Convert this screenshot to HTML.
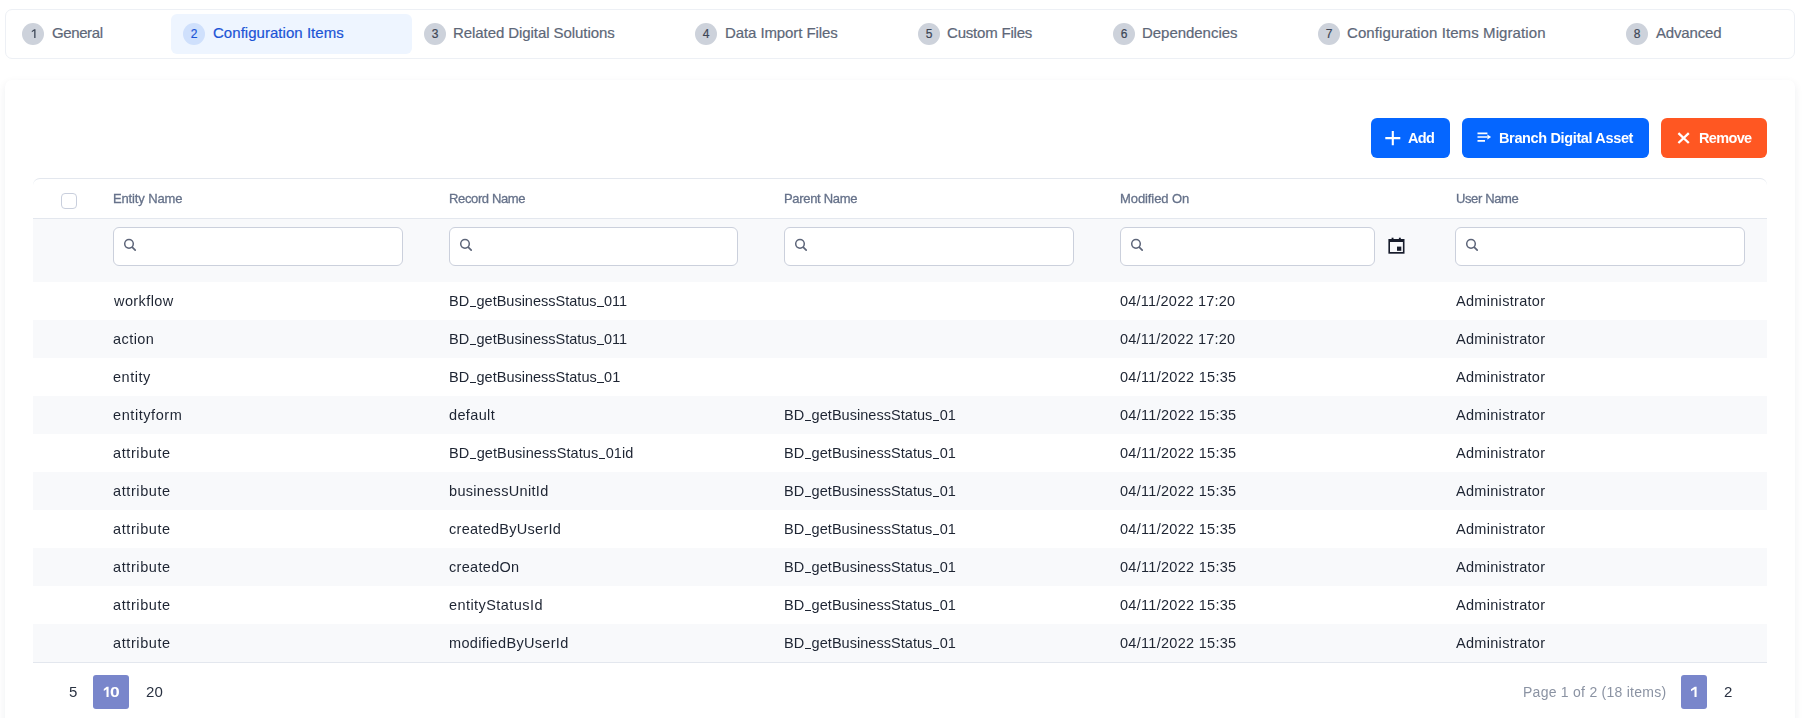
<!DOCTYPE html><html><head><meta charset="utf-8"><title>Configuration Items</title><style>
*{box-sizing:border-box;margin:0;padding:0}
html,body{width:1802px;height:718px;overflow:hidden;background:#fff;font-family:"Liberation Sans",sans-serif;}
.abs{position:absolute}
.t{position:absolute;white-space:nowrap;line-height:20px;will-change:transform;}
#tabs{position:absolute;left:5px;top:9px;width:1790px;height:50px;border:1px solid #edf0f5;border-radius:7px;background:#fff}
#act{position:absolute;left:171px;top:14px;width:241px;height:40px;border-radius:6px;background:#eef5ff}
.c{position:absolute;top:23px;width:22px;height:22px;border-radius:50%;background:#cdd2db;color:#3d4656;font-size:12px;line-height:22px;text-align:center;-webkit-text-stroke:0.2px currentColor}
.c.a{background:#cfe0fc;color:#1b54d6}
.tl{top:23px;font-size:15px;color:#5d6778;will-change:auto;-webkit-text-stroke:0.2px #5d6778}
.tl.a{color:#1b54d6;-webkit-text-stroke-color:#1b54d6}
#card{position:absolute;left:5px;top:80px;width:1790px;height:700px;background:#fff;border-radius:7px;box-shadow:0 3px 8px rgba(30,40,70,0.075)}
.btn{position:absolute;top:118px;height:40px;border-radius:6px;color:#fff;}
  .bt{top:128px;font-size:14.5px;font-weight:bold;color:#fff}
#tbl{position:absolute;left:33px;top:178px;width:1734px;height:485px;border-top:1px solid #e3e7ee;border-bottom:1px solid #e3e7ee;border-radius:7px 7px 0 0;}
#hb{position:absolute;left:33px;top:218px;width:1734px;height:1px;background:#e3e7ee}
#frow{position:absolute;left:33px;top:219px;width:1734px;height:63px;background:#f8f9fb}
.alt{position:absolute;left:33px;width:1734px;height:38px;background:#f8f9fb}
.h{top:189px;font-size:13px;color:#66728a;-webkit-text-stroke:0.3px #66728a;}
.d{font-size:14.5px;color:#1e2533;}
.in{position:absolute;top:227px;height:39px;border:1px solid #cbd0dc;border-radius:6px;background:#fff}
.cb{position:absolute;left:61px;top:193px;width:16px;height:16px;border:1px solid #c9cfdd;border-radius:4px;background:#fff}
.u{display:inline-block;width:6.6px;height:1.3px;background:#1e2533;vertical-align:-1.4px;margin:0 0.4px}
.pg{font-size:14px;color:#2a3242;top:682px}
.pb{position:absolute;background:#7986cb;border-radius:3px;}
.pw{font-size:15px;color:#fff;font-weight:bold;top:682px}
.pn{font-size:15px;color:#2a3242;top:682px}
</style></head><body>
<div id="tabs"></div><div id="act"></div>
<div class="c" style="left:22px"><svg class="abs" style="left:8.5px;top:6px" width="6" height="10" viewBox="0 0 6 10"><path d="M3.2 0.2H4.5V9H3.2V1.8L0.8 3.3V1.9L3.2 0.2z" fill="#3d4656"/></svg></div><div class="t tl" id="tab1" style="left:52.00px;letter-spacing:-0.399px;">General</div>
<div class="c a" style="left:183px">2</div><div class="t tl a" id="tab2" style="left:213.00px;letter-spacing:0.036px;">Configuration Items</div>
<div class="c" style="left:424px">3</div><div class="t tl" id="tab3" style="left:453.00px;letter-spacing:-0.072px;">Related Digital Solutions</div>
<div class="c" style="left:695px">4</div><div class="t tl" id="tab4" style="left:725.00px;letter-spacing:-0.094px;">Data Import Files</div>
<div class="c" style="left:918px">5</div><div class="t tl" id="tab5" style="left:947.00px;letter-spacing:-0.197px;">Custom Files</div>
<div class="c" style="left:1113px">6</div><div class="t tl" id="tab6" style="left:1142.00px;letter-spacing:-0.039px;">Dependencies</div>
<div class="c" style="left:1318px">7</div><div class="t tl" id="tab7" style="left:1347.00px;letter-spacing:0.091px;">Configuration Items Migration</div>
<div class="c" style="left:1626px">8</div><div class="t tl" id="tab8" style="left:1656.00px;letter-spacing:-0.173px;">Advanced</div>
<div id="card"></div>
<div class="btn" style="left:1371px;width:79px;background:#0566ff"><svg class="abs" style="left:14px;top:13px" width="16" height="15" viewBox="0 0 16 15"><path d="M7.8 0v14.3M0.3 7.15h15" stroke="#fff" stroke-width="2.1" fill="none"/></svg></div>
<div class="t bt" id="b1" style="left:1408.00px;letter-spacing:-0.705px;">Add</div>
<div class="btn" style="left:1462px;width:187px;background:#0566ff"><svg class="abs" style="left:15px;top:13px" width="16" height="12" viewBox="0 0 16 12"><path d="M0.5 2.3h9.9M0.5 6h9.9M0.5 9.8h7.5" stroke="#fff" stroke-width="1.7" fill="none"/><path d="M10.4 3.5L14.1 6L10.4 8.5z" fill="#fff"/></svg></div>
<div class="t bt" id="b2" style="left:1499.00px;letter-spacing:-0.361px;">Branch Digital Asset</div>
<div class="btn" style="left:1661px;width:106px;background:#ff5722"><svg class="abs" style="left:16px;top:14px" width="13" height="12" viewBox="0 0 13 12"><path d="M1.4 1.1l10.4 9.9M11.8 1.1L1.4 11" stroke="#fff" stroke-width="2.3" fill="none"/></svg></div>
<div class="t bt" id="b3" style="left:1699.00px;letter-spacing:-0.665px;">Remove</div>
<div id="tbl"></div><div id="hb"></div><div id="frow"></div>
<div class="cb"></div>
<div class="t h" id="h0" style="left:113.00px;letter-spacing:-0.138px;">Entity Name</div>
<div class="t h" id="h1" style="left:449.00px;letter-spacing:-0.364px;">Record Name</div>
<div class="t h" id="h2" style="left:784.00px;letter-spacing:-0.321px;">Parent Name</div>
<div class="t h" id="h3" style="left:1120.00px;letter-spacing:-0.089px;">Modified On</div>
<div class="t h" id="h4" style="left:1456.00px;letter-spacing:-0.385px;">User Name</div>
<div class="in" style="left:113px;width:290px"><svg class="abs" style="left:9px;top:10px" width="15" height="15" viewBox="0 0 15 15"><circle cx="6" cy="5.85" r="4.3" stroke="#5d6579" stroke-width="1.5" fill="none"/><path d="M9.4 9.3L12.2 12.1" stroke="#5d6579" stroke-width="1.7" stroke-linecap="round"/></svg></div>
<div class="in" style="left:449px;width:289px"><svg class="abs" style="left:9px;top:10px" width="15" height="15" viewBox="0 0 15 15"><circle cx="6" cy="5.85" r="4.3" stroke="#5d6579" stroke-width="1.5" fill="none"/><path d="M9.4 9.3L12.2 12.1" stroke="#5d6579" stroke-width="1.7" stroke-linecap="round"/></svg></div>
<div class="in" style="left:784px;width:290px"><svg class="abs" style="left:9px;top:10px" width="15" height="15" viewBox="0 0 15 15"><circle cx="6" cy="5.85" r="4.3" stroke="#5d6579" stroke-width="1.5" fill="none"/><path d="M9.4 9.3L12.2 12.1" stroke="#5d6579" stroke-width="1.7" stroke-linecap="round"/></svg></div>
<div class="in" style="left:1120px;width:255px"><svg class="abs" style="left:9px;top:10px" width="15" height="15" viewBox="0 0 15 15"><circle cx="6" cy="5.85" r="4.3" stroke="#5d6579" stroke-width="1.5" fill="none"/><path d="M9.4 9.3L12.2 12.1" stroke="#5d6579" stroke-width="1.7" stroke-linecap="round"/></svg></div>
<div class="in" style="left:1455px;width:290px"><svg class="abs" style="left:9px;top:10px" width="15" height="15" viewBox="0 0 15 15"><circle cx="6" cy="5.85" r="4.3" stroke="#5d6579" stroke-width="1.5" fill="none"/><path d="M9.4 9.3L12.2 12.1" stroke="#5d6579" stroke-width="1.7" stroke-linecap="round"/></svg></div>
<svg class="abs" style="left:1388px;top:237px" width="17" height="17" viewBox="0 0 17 17"><g fill="#171c2b"><rect x="0.4" y="2" width="16.1" height="14.7"/><rect x="3.6" y="0.7" width="1.9" height="2"/><rect x="10.9" y="0.7" width="1.9" height="2"/></g><rect x="2" y="5" width="12.9" height="10" fill="#f8f9fb"/><rect x="9" y="9.6" width="4.3" height="4.2" fill="#171c2b"/></svg>
<div class="t d" id="r0c0" style="left:114.00px;letter-spacing:0.410px;top:291px;">workflow</div>
<div class="t d" id="r0c1" style="left:449.00px;letter-spacing:-0.003px;top:291px;">BD<span class="u"></span>getBusinessStatus<span class="u"></span>011</div>
<div class="t d" id="r0c3" style="left:1120.00px;letter-spacing:0.220px;top:291px;">04/11/2022 17:20</div>
<div class="t d" id="r0c4" style="left:1456.00px;letter-spacing:0.302px;top:291px;">Administrator</div>
<div class="alt" style="top:320px"></div>
<div class="t d" id="r1c0" style="left:113.00px;letter-spacing:0.428px;top:329px;">action</div>
<div class="t d" id="r1c1" style="left:449.00px;letter-spacing:-0.003px;top:329px;">BD<span class="u"></span>getBusinessStatus<span class="u"></span>011</div>
<div class="t d" id="r1c3" style="left:1120.00px;letter-spacing:0.220px;top:329px;">04/11/2022 17:20</div>
<div class="t d" id="r1c4" style="left:1456.00px;letter-spacing:0.302px;top:329px;">Administrator</div>
<div class="t d" id="r2c0" style="left:113.00px;letter-spacing:0.509px;top:367px;">entity</div>
<div class="t d" id="r2c1" style="left:449.00px;letter-spacing:0.005px;top:367px;">BD<span class="u"></span>getBusinessStatus<span class="u"></span>01</div>
<div class="t d" id="r2c3" style="left:1120.00px;letter-spacing:0.289px;top:367px;">04/11/2022 15:35</div>
<div class="t d" id="r2c4" style="left:1456.00px;letter-spacing:0.302px;top:367px;">Administrator</div>
<div class="alt" style="top:396px"></div>
<div class="t d" id="r3c0" style="left:113.00px;letter-spacing:0.573px;top:405px;">entityform</div>
<div class="t d" id="r3c1" style="left:449.00px;letter-spacing:0.358px;top:405px;">default</div>
<div class="t d" id="r3c2" style="left:784.00px;letter-spacing:0.038px;top:405px;">BD<span class="u"></span>getBusinessStatus<span class="u"></span>01</div>
<div class="t d" id="r3c3" style="left:1120.00px;letter-spacing:0.288px;top:405px;">04/11/2022 15:35</div>
<div class="t d" id="r3c4" style="left:1456.00px;letter-spacing:0.302px;top:405px;">Administrator</div>
<div class="t d" id="r4c0" style="left:113.00px;letter-spacing:0.598px;top:443px;">attribute</div>
<div class="t d" id="r4c1" style="left:449.00px;letter-spacing:0.086px;top:443px;">BD<span class="u"></span>getBusinessStatus<span class="u"></span>01id</div>
<div class="t d" id="r4c2" style="left:784.00px;letter-spacing:0.038px;top:443px;">BD<span class="u"></span>getBusinessStatus<span class="u"></span>01</div>
<div class="t d" id="r4c3" style="left:1120.00px;letter-spacing:0.289px;top:443px;">04/11/2022 15:35</div>
<div class="t d" id="r4c4" style="left:1456.00px;letter-spacing:0.302px;top:443px;">Administrator</div>
<div class="alt" style="top:472px"></div>
<div class="t d" id="r5c0" style="left:113.00px;letter-spacing:0.598px;top:481px;">attribute</div>
<div class="t d" id="r5c1" style="left:449.00px;letter-spacing:0.316px;top:481px;">businessUnitId</div>
<div class="t d" id="r5c2" style="left:784.00px;letter-spacing:0.038px;top:481px;">BD<span class="u"></span>getBusinessStatus<span class="u"></span>01</div>
<div class="t d" id="r5c3" style="left:1120.00px;letter-spacing:0.288px;top:481px;">04/11/2022 15:35</div>
<div class="t d" id="r5c4" style="left:1456.00px;letter-spacing:0.302px;top:481px;">Administrator</div>
<div class="t d" id="r6c0" style="left:113.00px;letter-spacing:0.598px;top:519px;">attribute</div>
<div class="t d" id="r6c1" style="left:449.00px;letter-spacing:0.278px;top:519px;">createdByUserId</div>
<div class="t d" id="r6c2" style="left:784.00px;letter-spacing:0.038px;top:519px;">BD<span class="u"></span>getBusinessStatus<span class="u"></span>01</div>
<div class="t d" id="r6c3" style="left:1120.00px;letter-spacing:0.289px;top:519px;">04/11/2022 15:35</div>
<div class="t d" id="r6c4" style="left:1456.00px;letter-spacing:0.302px;top:519px;">Administrator</div>
<div class="alt" style="top:548px"></div>
<div class="t d" id="r7c0" style="left:113.00px;letter-spacing:0.598px;top:557px;">attribute</div>
<div class="t d" id="r7c1" style="left:449.00px;letter-spacing:0.307px;top:557px;">createdOn</div>
<div class="t d" id="r7c2" style="left:784.00px;letter-spacing:0.038px;top:557px;">BD<span class="u"></span>getBusinessStatus<span class="u"></span>01</div>
<div class="t d" id="r7c3" style="left:1120.00px;letter-spacing:0.288px;top:557px;">04/11/2022 15:35</div>
<div class="t d" id="r7c4" style="left:1456.00px;letter-spacing:0.302px;top:557px;">Administrator</div>
<div class="t d" id="r8c0" style="left:113.00px;letter-spacing:0.598px;top:595px;">attribute</div>
<div class="t d" id="r8c1" style="left:449.00px;letter-spacing:0.432px;top:595px;">entityStatusId</div>
<div class="t d" id="r8c2" style="left:784.00px;letter-spacing:0.038px;top:595px;">BD<span class="u"></span>getBusinessStatus<span class="u"></span>01</div>
<div class="t d" id="r8c3" style="left:1120.00px;letter-spacing:0.289px;top:595px;">04/11/2022 15:35</div>
<div class="t d" id="r8c4" style="left:1456.00px;letter-spacing:0.302px;top:595px;">Administrator</div>
<div class="alt" style="top:624px"></div>
<div class="t d" id="r9c0" style="left:113.00px;letter-spacing:0.598px;top:633px;">attribute</div>
<div class="t d" id="r9c1" style="left:449.00px;letter-spacing:0.323px;top:633px;">modifiedByUserId</div>
<div class="t d" id="r9c2" style="left:784.00px;letter-spacing:0.038px;top:633px;">BD<span class="u"></span>getBusinessStatus<span class="u"></span>01</div>
<div class="t d" id="r9c3" style="left:1120.00px;letter-spacing:0.288px;top:633px;">04/11/2022 15:35</div>
<div class="t d" id="r9c4" style="left:1456.00px;letter-spacing:0.302px;top:633px;">Administrator</div>
<div class="t pn" id="p5" style="left:69.00px;letter-spacing:0.000px;">5</div>
<div class="pb" style="left:93px;top:675px;width:36px;height:34px"></div>
<svg class="abs" style="left:103px;top:686px" width="8" height="12" viewBox="0 0 8 12"><path d="M5.6 0.8V11H3.5V3.2L0.8 4.9V2.9L3.7 0.8z" fill="#fff"/></svg>
<div class="t pw" style="left:110px;transform:scaleX(1.16);transform-origin:0 0">0</div>
<div class="t pn" id="p20" style="left:146.00px;letter-spacing:0.042px;">20</div>
<div class="t pg" id="pinfo" style="left:1523.00px;letter-spacing:0.255px;color:#8b93a3;">Page 1 of 2 (18 items)</div>
<div class="pb" style="left:1681px;top:675px;width:26px;height:34px"></div>
<svg class="abs" style="left:1690px;top:686px" width="8" height="12" viewBox="0 0 8 12"><path d="M6.6 0.8V11H4.5V3.2L1 5.3V3.2L4.7 0.8z" fill="#fff"/></svg>
<div class="t pn" id="p2" style="left:1724.00px;letter-spacing:0.000px;">2</div>
</body></html>
